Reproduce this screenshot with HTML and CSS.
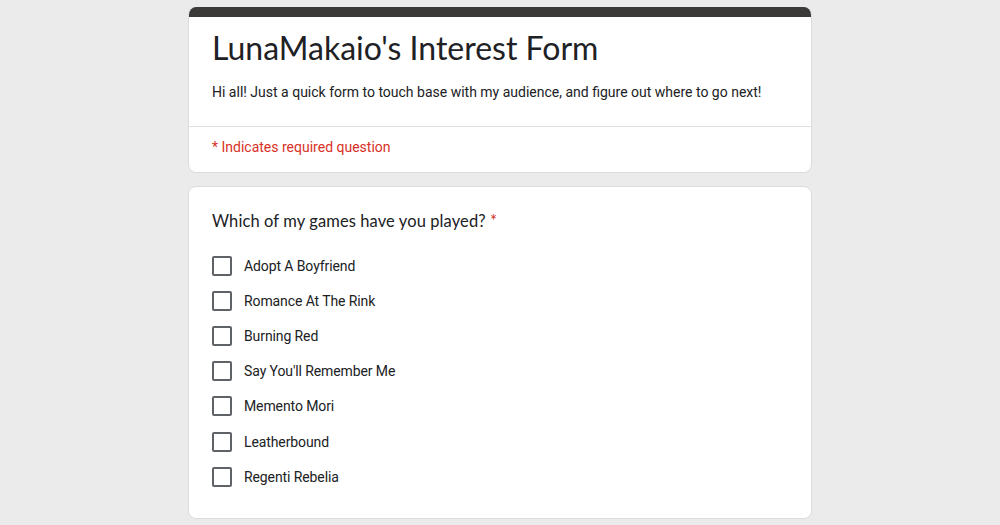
FILE: index.html
```html
<!DOCTYPE html>
<html>
<head>
<meta charset="utf-8">
<link rel="stylesheet" href="styles.css">
</head>
<body>
<div class="wrap">
  <div class="card header">
    <div class="band"></div>
    <div class="head-top">
      <h1 class="title">LunaMakaio's Interest Form</h1>
      <div class="desc">Hi all! Just a quick form to touch base with my audience, and figure out where to go next!</div>
    </div>
    <div class="head-bottom">
      <div class="req">* Indicates required question</div>
    </div>
  </div>
  <div class="card question">
    <div class="q-title">Which of my games have you played? <span class="star">*</span></div>
    <div class="options">
      <label class="opt"><span class="box"></span><span class="lbl">Adopt A Boyfriend</span></label>
      <label class="opt"><span class="box"></span><span class="lbl">Romance At The Rink</span></label>
      <label class="opt"><span class="box"></span><span class="lbl">Burning Red</span></label>
      <label class="opt"><span class="box"></span><span class="lbl">Say You'll Remember Me</span></label>
      <label class="opt"><span class="box"></span><span class="lbl">Memento Mori</span></label>
      <label class="opt"><span class="box"></span><span class="lbl">Leatherbound</span></label>
      <label class="opt"><span class="box"></span><span class="lbl">Regenti Rebelia</span></label>
    </div>
  </div>
</div>
</body>
</html>
```
FILE: styles.css
```css
html, body {
  margin: 0;
  padding: 0;
  background: #ebebeb;
}
body {
  font-family: Roboto, "Liberation Sans", sans-serif;
  color: #202124;
}
.wrap {
  width: 624px;
  margin: 0 auto;
  padding-top: 7px;
  display: flex;
  flex-direction: column;
  gap: 13px;
}
.card {
  background: #fff;
  border: 1px solid #dadce0;
  border-radius: 8px;
  box-sizing: border-box;
}
.header {
  border-top: none;
  overflow: hidden;
}
.band {
  height: 10px;
  background: #3c3a38;
  margin: 0 -1px;
}
.head-top {
  padding: 11px 24px 24px 23px;
  border-bottom: 1px solid #e0e0e0;
}
.title {
  margin: 0;
  font-family: Lato, sans-serif;
  font-weight: 400;
  font-size: 32px;
  line-height: 40px;
  letter-spacing: 0;
}
.desc {
  margin-top: 14px;
  font-size: 14px;
  line-height: 20px;
  letter-spacing: 0;
}
.head-bottom {
  padding: 10px 24px 15px 23px;
}
.req {
  color: #d93025;
  font-size: 14px;
  line-height: 20px;
  letter-spacing: 0;
}
.question {
  padding: 22px 24px 24px 23px;
}
.q-title {
  font-family: Lato, sans-serif;
  font-size: 16.5px;
  line-height: 24px;
  letter-spacing: 0.1px;
}
.star {
  color: #d93025;
}
.options {
  margin-top: 15px;
  display: flex;
  flex-direction: column;
}
.opt {
  display: flex;
  align-items: center;
  height: 35.2px;
  gap: 12px;
}
.box {
  width: 20px;
  height: 20px;
  box-sizing: border-box;
  border: 2px solid #5f6368;
  border-radius: 2px;
  flex: none;
}
.lbl {
  font-size: 14px;
  line-height: 20px;
  letter-spacing: -0.1px;
}
```
